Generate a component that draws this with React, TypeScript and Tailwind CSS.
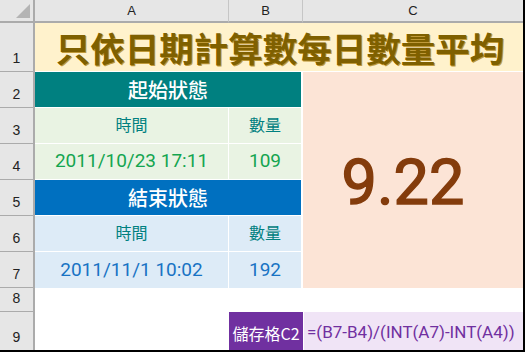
const hdr = "flex items-center justify-center bg-[#e6e6e6] text-[13px] text-[#222] font-['Liberation_Sans',sans-serif]";
const rowHdr =
  "flex items-end justify-center pb-[2px] bg-[#e6e6e6] border-r-2 border-b border-[#ababab] text-[14px] text-[#222] font-['Liberation_Sans',sans-serif]";
const cjk = "font-['Noto_Sans_CJK_TC',sans-serif]";
const num = "font-['Roboto','Noto_Sans_CJK_TC',sans-serif]";

export default function App() {
  return (
    <div className="h-[352px] w-[525px] overflow-hidden border-b-2 border-r-2 border-black bg-white">
      <div className="grid grid-cols-[35px_194px_74px_220px] grid-rows-[23px_49px_36px_36px_36px_36px_36px_36px_24px_38px]">
        {/* column headers */}
        <div className="relative border-b-2 border-r-2 border-[#ababab] bg-[#e6e6e6]">
          <svg className="absolute right-[3px] bottom-[3px]" width="14" height="14" viewBox="0 0 14 14">
            <polygon points="14,0 14,14 0,14" fill="#b4b4b4" />
          </svg>
        </div>
        <div className={`${hdr} border-b-2 border-r border-b-[#ababab] border-r-[#c6c6c6]`}>A</div>
        <div className={`${hdr} border-b-2 border-r border-b-[#ababab] border-r-[#c6c6c6]`}>B</div>
        <div className={`${hdr} border-b-2 border-b-[#ababab]`}>C</div>

        {/* row 1 */}
        <div className={rowHdr}>1</div>
        <div
          className={`col-span-3 flex items-center justify-center border-b border-white bg-[#fff2cc] pl-[2px] text-[34.5px] leading-none font-bold text-[#7f6000] [text-shadow:1px_1px_0_#c09a3a] ${cjk}`}
        >
          只依日期計算數每日數量平均
        </div>

        {/* row 2 */}
        <div className={rowHdr}>2</div>
        <div
          className={`col-span-2 flex items-center justify-center border-b border-r-2 border-white bg-[#008080] text-[20px] font-medium text-white ${cjk}`}
        >
          起始狀態
        </div>
        <div
          className={`row-span-6 flex items-center justify-center bg-[#fce4d6] pt-[6px] pr-[20px] text-[63px] font-normal text-[#843c0c] [-webkit-text-stroke:1.4px_#843c0c] ${num}`}
        >
          9.22
        </div>

        {/* row 3 */}
        <div className={rowHdr}>3</div>
        <div className={`flex items-center justify-center border-b border-r border-white bg-[#e9f3e3] pb-[3px] text-[16px] text-[#008080] ${cjk}`}>
          時間
        </div>
        <div className={`flex items-center justify-center border-b border-r-2 border-white bg-[#e9f3e3] pb-[3px] text-[16px] text-[#008080] ${cjk}`}>
          數量
        </div>

        {/* row 4 */}
        <div className={rowHdr}>4</div>
        <div className={`flex items-center justify-center border-b border-r border-white bg-[#e9f3e3] text-[19px] text-[#14a550] ${num}`}>
          2011/10/23 17:11
        </div>
        <div className={`flex items-center justify-center border-b border-r-2 border-white bg-[#e9f3e3] text-[19px] text-[#14a550] ${num}`}>
          109
        </div>

        {/* row 5 */}
        <div className={rowHdr}>5</div>
        <div
          className={`col-span-2 flex items-center justify-center border-b border-r-2 border-white bg-[#0070c0] text-[20px] font-medium text-white ${cjk}`}
        >
          結束狀態
        </div>

        {/* row 6 */}
        <div className={rowHdr}>6</div>
        <div className={`flex items-center justify-center border-b border-r border-white bg-[#ddebf7] pb-[3px] text-[16px] text-[#008080] ${cjk}`}>
          時間
        </div>
        <div className={`flex items-center justify-center border-b border-r-2 border-white bg-[#ddebf7] pb-[3px] text-[16px] text-[#008080] ${cjk}`}>
          數量
        </div>

        {/* row 7 */}
        <div className={rowHdr}>7</div>
        <div className={`flex items-center justify-center border-r border-white bg-[#ddebf7] text-[19px] text-[#1873c4] ${num}`}>
          2011/11/1 10:02
        </div>
        <div className={`flex items-center justify-center border-r-2 border-white bg-[#ddebf7] text-[19px] text-[#1873c4] ${num}`}>
          192
        </div>

        {/* row 8 */}
        <div className={rowHdr}>8</div>
        <div className="col-span-3 bg-white" />

        {/* row 9 */}
        <div className={`${rowHdr} border-b-0`}>9</div>
        <div className="bg-white" />
        <div className={`flex items-center justify-center bg-[#7030a0] pt-[4px] text-[16px] text-white ${cjk}`}>
          儲存格C2
        </div>
        <div className={`flex items-center border-l border-white bg-[#f0e4f6] pl-[3px] pt-[4px] text-[17px] text-[#7030a0] ${num}`}>
          =(B7-B4)/(INT(A7)-INT(A4))
        </div>
      </div>
    </div>
  );
}
